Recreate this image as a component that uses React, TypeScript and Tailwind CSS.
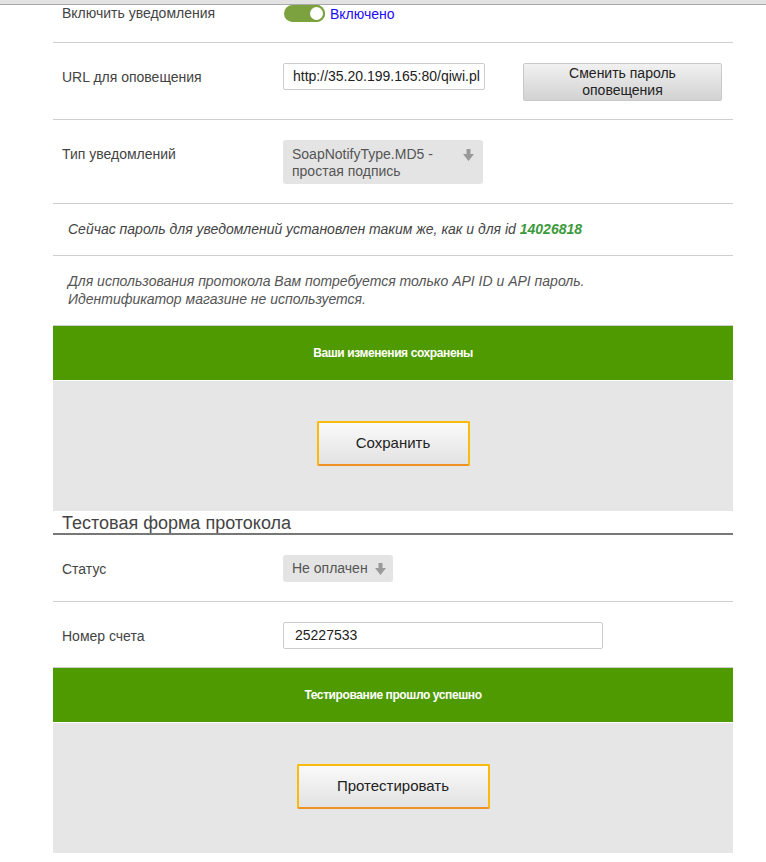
import React from "react";

const font = { fontFamily: '"Liberation Sans", Arial, sans-serif' };

function DownArrow() {
  return (
    <svg width="11" height="12" viewBox="0 0 11 12" className="shrink-0">
      <rect x="3.5" y="0" width="4" height="6" fill="#9a9a9a" />
      <polygon points="0,5 11,5 5.5,12" fill="#9a9a9a" />
    </svg>
  );
}

function Sep() {
  return <div className="h-px bg-[#cfcfcf]" />;
}

export default function App() {
  return (
    <div className="min-h-[862px] bg-white text-[14px] text-[#444]" style={font}>
      <div className="h-[5px] bg-[#e2e2e2] border-b border-[#a9a9a9]" />
      <div className="ml-[53px] w-[680px]">
        {/* Row 1 */}
        <div className="flex h-[37px] items-start">
          <div className="w-[231px] pl-[9px] pt-[0px] leading-[16px]">Включить уведомления</div>
          <div className="flex items-center gap-[5px] pt-0">
            <div className="relative h-[17px] w-[41px] rounded-full bg-[#7ca13f]">
              <div className="absolute right-0 top-0 h-[17px] w-[17px] rounded-full border-[2px] border-[#7ca13f] bg-white" />
            </div>
            <span className="text-[#1c0bf5] leading-[16px]">Включено</span>
          </div>
        </div>
        <Sep />
        {/* Row 2 */}
        <div className="flex pt-[20px] pb-[18px]">
          <div className="w-[230px] pl-[9px] pt-[6px] leading-[16px]">URL для оповещения</div>
          <div className="h-[27px] w-[202px] overflow-hidden whitespace-nowrap rounded-[2px] border border-[#cccccc] pl-[9px] leading-[25px] text-[#222]">
            http://35.20.199.165:80/qiwi.pl
          </div>
          <div className="ml-[38px] flex h-[38px] w-[199px] items-center justify-center rounded-[2px] border border-[#c9c9c9] bg-gradient-to-b from-[#f1f1f1] to-[#d2d2d2] text-center leading-[17px] text-[#222]">
            Сменить пароль
            <br />
            оповещения
          </div>
        </div>
        <Sep />
        {/* Row 3 */}
        <div className="flex pt-[20px] pb-[19px]">
          <div className="w-[230px] pl-[9px] pt-[6px] leading-[16px]">Тип уведомлений</div>
          <div className="flex h-[44px] w-[200px] items-start justify-between rounded-[3px] bg-[#e4e4e4] pl-[9px] pr-[9px] pt-[6px] leading-[17px] text-[#555]">
            <span>
              SoapNotifyType.MD5 -
              <br />
              простая подпись
            </span>
            <span className="pt-[3px]">
              <DownArrow />
            </span>
          </div>
        </div>
        <Sep />
        {/* Row 4 */}
        <div className="flex h-[51px] items-center pl-[15px] italic text-[#444]">
          <span>
            Сейчас пароль для уведомлений установлен таким же, как и для id{" "}
            <b className="text-[#3c9a3c]">14026818</b>
          </span>
        </div>
        <Sep />
        {/* Row 5 */}
        <div className="h-[69px] pl-[15px] pt-[16px] italic leading-[18px] text-[#555]">
          Для использования протокола Вам потребуется только API ID и API пароль.
          <br />
          Идентификатор магазине не используется.
        </div>
        <Sep />
        <div className="flex h-[54px] items-center justify-center bg-[#4f9a00] text-[12px] font-bold tracking-[-0.4px] text-white">
          Ваши изменения сохранены
        </div>
        <div className="h-px bg-white" />
        <div className="flex h-[130px] items-start justify-center bg-[#e6e6e6] pt-[40px]">
          <div className="flex h-[45px] w-[153px] items-center justify-center rounded-[2px] border-[2px] border-[#fbbb0d] border-b-[#ee9223] bg-gradient-to-b from-[#fafafa] to-[#e2e2e2] text-[15px] text-[#222]">
            Сохранить
          </div>
        </div>
        <div className="h-[22px] pl-[9px] pt-[2px] text-[18px] leading-[20px] text-[#444]">Тестовая форма протокола</div>
        <div className="h-[2px] bg-[#777]" />
        {/* Status */}
        <div className="flex pt-[20px] pb-[19px]">
          <div className="w-[230px] pl-[9px] pt-[6px] leading-[16px]">Статус</div>
          <div className="flex h-[27px] items-center gap-[7px] rounded-[3px] bg-[#e4e4e4] pl-[9px] pr-[7px] text-[#555]">
            <span>Не оплачен</span>
            <DownArrow />
          </div>
        </div>
        <Sep />
        <div className="flex pt-[20px] pb-[18px]">
          <div className="w-[230px] pl-[9px] pt-[6px] leading-[16px]">Номер счета</div>
          <div className="h-[27px] w-[320px] rounded-[2px] border border-[#cccccc] pl-[11px] leading-[25px] text-[#222]">
            25227533
          </div>
        </div>
        <Sep />
        <div className="flex h-[54px] items-center justify-center bg-[#4f9a00] text-[12px] font-bold tracking-[-0.4px] text-white">
          Тестирование прошло успешно
        </div>
        <div className="h-px bg-white" />
        <div className="flex h-[130px] items-start justify-center bg-[#e6e6e6] pt-[41px]">
          <div className="flex h-[45px] w-[193px] items-center justify-center rounded-[2px] border-[2px] border-[#fbbb0d] border-b-[#ee9223] bg-gradient-to-b from-[#fafafa] to-[#e2e2e2] text-[15px] text-[#222]">
            Протестировать
          </div>
        </div>
      </div>
    </div>
  );
}
